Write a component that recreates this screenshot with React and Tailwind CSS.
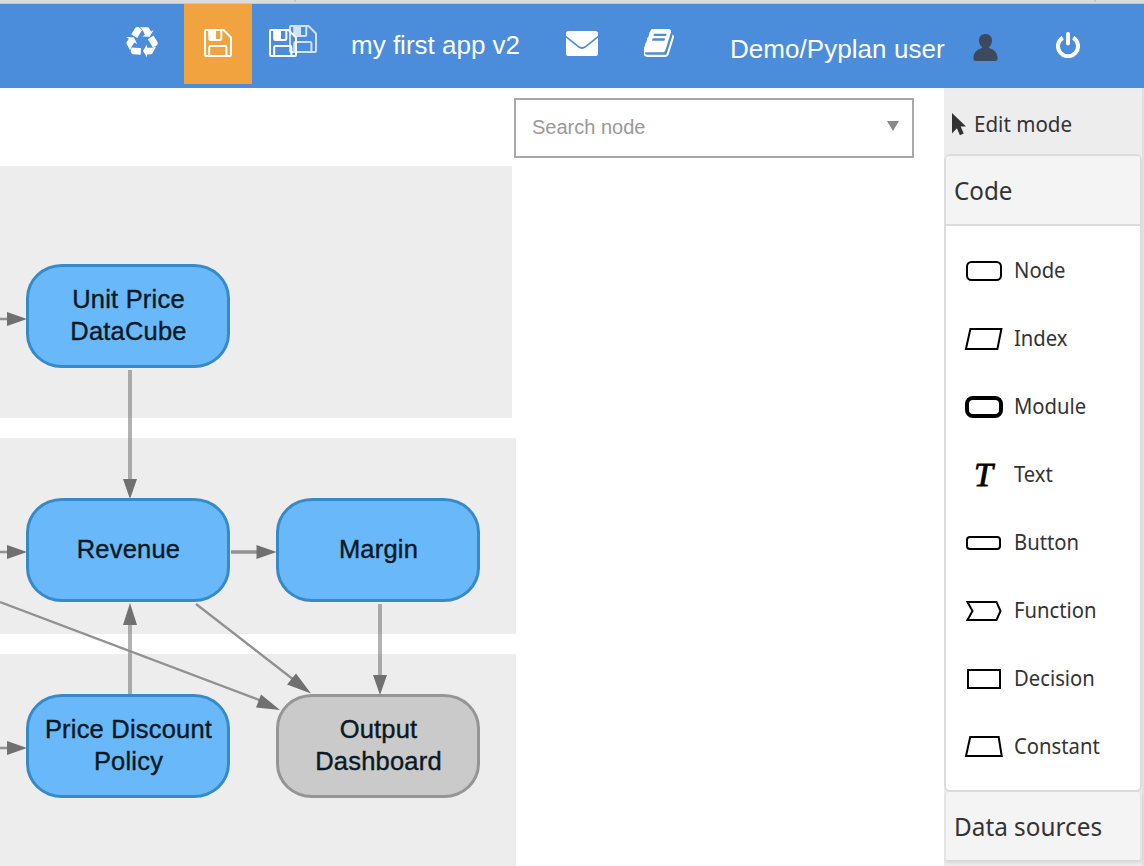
function Recycle() {
  return (
    <svg width="32" height="31" viewBox="0 0 1792 1736" fill="#fff">
      <path d="M836 1169l-15 368-2 22-420-29q-36-3-67-31.500t-47-65.500q-11-27-14.500-55t4-65 12-55 21.500-64 19-53q78 12 509 28zm-387-586l180 379-147-92q-63 72-111.500 144.500t-72.500 125-39.500 94.500-18.500 63l-4 21-190-357q-17-26-18-56t6-47l8-18q35-63 114-188l-140-86zm1231 517l-188 359q-12 29-36.500 46.500t-43.500 20.500l-18 4q-71 7-219 12l8 164-230-367 211-362 7 173q170 16 283 5t170-33zm-785-924q-47 63-265 435l-317-187-19-12 225-356q20-31 60-45t80-10q24 2 48.500 12t42 21 41.500 33 36 34.500 36 39.500 32 35zm655 307l212 363q18 37 12.500 76t-27.500 74q-13 20-33 37t-38 28-48.500 22-47 16-51.500 14-46 12q-34-72-265-436l313-195zm-143-226l142-83-220 373-419-20 151-86q-34-89-75-166t-75.500-123.500-64.500-80-47-46.500l-17-13 405 1q31-3 58 10.500t39 28.500l11 15q39 61 112 190z" />
    </svg>
  );
}

function Floppy({ className }) {
  return (
    <svg viewBox="0 0 28 28" className={className} fill="none" stroke="#fff" strokeWidth="2" strokeLinejoin="round">
      <path d="M2 1h17.500L27 8.500V26q0 1-1 1H2q-1 0-1-1V2q0-1 1-1z" />
      <path d="M5.200 1v8.800q0 1.200 1.200 1.200h9.700q1.200 0 1.200-1.200v-8.800M5.200 27v-8.700q0-1.200 1.200-1.200h14.800q1.200 0 1.200 1.200v8.700" />
      <path d="M5.500 1.500h6.500v9h-6.500z" fill="#fff" stroke="none" />
    </svg>
  );
}

function Envelope() {
  return (
    <svg width="32" height="25" viewBox="0 0 32 25">
      <rect width="32" height="25" rx="2.500" fill="#fff" />
      <path d="M-.5 5.300 12.700 15.800q3.300 2.500 6.600 0L32.500 5.300" fill="none" stroke="#4b8ddb" strokeWidth="1.700" />
    </svg>
  );
}

function Book() {
  return (
    <svg width="30" height="28" viewBox="64 128 1600 1536" preserveAspectRatio="none" fill="#fff">
      <path d="M1639 478q40 57 18 129l-275 906q-19 64-76.500 107.500t-122.500 43.500h-923q-77 0-148.500-53.500t-99.500-131.500q-24-67-2-127 0-4 3-27t4-37q1-8-3-21.500t-3-19.500q2-11 8-21t16.500-23.500 16.500-23.500q23-38 45-91.500t30-91.500q3-10 .5-30t-.5-28q3-11 17-28t17-23q21-36 42-92t25-90q1-9-2.500-32t.5-28q4-13 22-30.500t22-22.500q19-26 42.500-84.500t27.500-96.500q1-8-3-25.500t-2-26.500q2-8 9-18t18-23 17-21q8-12 16.500-30.500t15-35 16-36 19.500-32 26.500-23.500 36-11.500 47.500 5.500l-1 3q38-9 51-9h761q74 0 114 56t18 130l-274 906q-36 119-71.500 153.500t-128.500 34.500h-869q-27 0-38 15-11 16-1 43 24 70 144 70h923q29 0 56-15.500t35-41.500l300-987q7-22 5-57 38 15 59 43zm-1064 2q-4 13 2 22.500t20 9.500h608q13 0 25.500-9.500t16.500-22.500l21-64q4-13-2-22.500t-20-9.500h-608q-13 0-25.500 9.500t-16.500 22.500zm-83 256q-4 13 2 22.500t20 9.500h608q13 0 25.500-9.500t16.500-22.500l21-64q4-13-2-22.500t-20-9.500h-608q-13 0-25.500 9.500t-16.500 22.500z" />
    </svg>
  );
}

function TopBar() {
  return (
    <header className="flex h-[84px] shrink-0 items-start bg-[#4b8ddb] font-['Liberation_Sans',sans-serif] text-white">
      <div className="flex h-20 w-[184px] items-center justify-end pr-[26px] pb-[4px]">
        <Recycle />
      </div>
      <div className="flex h-20 w-[68px] items-center justify-center bg-[#f1a33f] pr-[1px] pb-0.5">
        <Floppy className="h-7 w-7" />
      </div>
      <div className="ml-[17px] flex pt-[21px]">
        <Floppy className="mt-1 h-7 w-7" />
        <Floppy className="-ml-2 h-7 w-7 opacity-75" />
      </div>
      <span className="ml-[34px] w-[170px] pt-[26px] text-[26px] leading-[30px] whitespace-nowrap">my first app v2</span>
      <div className="ml-[45px] pt-[27px]"><Envelope /></div>
      <div className="ml-[46px] pt-[25px]"><Book /></div>
      <span className="ml-[56px] w-[216px] pt-[30px] text-[26px] leading-[30px] tracking-[0.05px] whitespace-nowrap">Demo/Pyplan user</span>
      <svg className="mt-[30px] ml-[27px]" width="25" height="27" viewBox="0 0 26 27" preserveAspectRatio="none" fill="#3b4a5c">
        <path d="M13 0c4.200 0 6.800 2.900 6.800 6.500 0 2.800-1.400 5.300-3.200 6.600v.8c5.500 1.600 8.900 4.800 8.900 9.600V25q0 2-2 2h-21q-2 0-2-2v-1.500c0-4.800 3.400-8 8.900-9.600v-.8c-1.800-1.300-3.200-3.800-3.200-6.600C6.200 2.900 8.800 0 13 0z" />
      </svg>
      <svg className="mt-[28px] ml-[58px]" width="24" height="26" viewBox="0 0 24 26" fill="none" stroke="#fff" strokeWidth="4" strokeLinecap="round">
        <path d="M12 2v9.500" />
        <path d="M6.800 5.700a10 10 0 1 0 10.400 0" strokeLinecap="butt" />
      </svg>
    </header>
  );
}

const blue = "border-[#368ac7] bg-[#69b9fa]";
const gray = "border-[#959595] bg-[#cacaca]";

const nodes = [
  { lines: ["Unit Price", "DataCube"], place: "left-[26px] top-[176px]", tone: blue },
  { lines: ["Revenue"], place: "left-[26px] top-[410px]", tone: blue },
  { lines: ["Margin"], place: "left-[276px] top-[410px]", tone: blue },
  { lines: ["Price Discount", "Policy"], place: "left-[26px] top-[606px]", tone: blue },
  { lines: ["Output", "Dashboard"], place: "left-[276px] top-[606px]", tone: gray },
];

function Edges() {
  return (
    <svg className="absolute top-0 left-0" width="520" height="778" viewBox="0 88 520 778">
      <g stroke="#666" strokeOpacity=".5" strokeWidth="4" fill="none">
        <path d="M130 370V480M130 694V624M380 604V676" />
      </g>
      <g stroke="#919191" strokeWidth="2.400" fill="none">
        <path d="M0 319H10M0 552H10M0 748H10M196 604 294 680M0 602 262 701" />
        <path d="M231 552H260" strokeWidth="3.500" />
      </g>
      <g fill="#707070">
        <path d="M7 312v14l20-7zM7 545v14l20-7zM7 741v14l20-7zM256.500 545v14l20-7z" />
        <path d="M123 479h14l-7 20zM123 625h14l-7-22zM373 675h14l-7 20z" />
        <path d="M296 673.500 287 684.500 311 693.500zM261 694.500 256 707.500 280 710z" />
      </g>
    </svg>
  );
}

function Diagram() {
  return (
    <main className="relative h-[778px] w-[944px] bg-white font-['Liberation_Sans',sans-serif]">
      <div className="absolute top-[78px] left-0 h-[252px] w-[512px] bg-[#ededed]" />
      <div className="absolute top-[350px] left-0 h-[196px] w-[516px] bg-[#ededed]" />
      <div className="absolute top-[566px] left-0 h-[212px] w-[516px] bg-[#ededed]" />
      <Edges />
      {nodes.map((n) => (
        <div
          key={n.lines[0]}
          className={`absolute flex h-[104px] w-[204px] flex-col items-center justify-center rounded-[36px/34px] border-[3.500px] pb-0.5 pl-[1px] text-[25.500px] leading-8 tracking-[0.2px] whitespace-nowrap text-[#0b1924] [-webkit-text-stroke:0.4px_#0b1924] ${n.place} ${n.tone}`}
        >
          {n.lines.map((l) => <span key={l}>{l}</span>)}
        </div>
      ))}
      <div className="absolute top-[10px] left-[514px] flex h-[60px] w-[400px] items-center justify-between border-2 border-[#a9a9a9] bg-white pr-[13px] pb-[2px] pl-4">
        <span className="text-[20px] leading-6 text-[#999]">Search node</span>
        <svg width="12" height="10" className="mb-[2px]" viewBox="0 0 12 10" fill="#888"><path d="M0 0h12L6 10z" /></svg>
      </div>
    </main>
  );
}

const shape = { fill: "none", stroke: "#000", strokeWidth: 2 };

const tools = [
  { name: "Node", icon: <rect x="3" y="5" width="34" height="18" rx="4.500" {...shape} /> },
  { name: "Index", icon: <path d="M6.400 4h31l-4 20h-31.500z" {...shape} /> },
  { name: "Module", icon: <rect x="3" y="5" width="34" height="18" rx="6" {...shape} strokeWidth="4" /> },
  { name: "Text", icon: null },
  { name: "Button", icon: <rect x="3" y="8" width="33" height="12" rx="3" {...shape} /> },
  { name: "Function", icon: <path d="M3.500 5H32.500l4 9-4 9H3.500l5-9z" {...shape} /> },
  { name: "Decision", icon: <path d="M4 5h32v18H4z" {...shape} /> },
  { name: "Constant", icon: <path d="M6.200 4h28.500l3 19H2z" {...shape} /> },
];

function Sidebar() {
  return (
    <aside className="flex h-[778px] w-[200px] flex-col border-r-[2px] border-[#e3dfdf] bg-[#ededed] font-['Noto_Sans',sans-serif] text-[#333]">
      <div className="flex h-[66px] shrink-0 items-center pt-[6px] pl-[8px]">
        <svg width="14" height="23" viewBox="0 0 14 23" fill="#333"><path d="M0 0 14 13.500H8.700l3 7-3.800 1.800-3-7L0 20.500z" /></svg>
        <span className="ml-2 origin-left scale-x-[0.935] pb-[2px] text-[22px] leading-7 whitespace-nowrap">Edit mode</span>
      </div>
      <section className="h-[638px] w-[198px] shrink-0 overflow-hidden rounded-[6px] border-2 border-[#dcdcdc] bg-white">
        <h2 className="flex h-[70px] items-center border-b-2 border-[#dcdcdc] bg-[#f4f4f4] pl-2 text-[26px]">
          <span className="origin-left scale-x-[0.93]">Code</span>
        </h2>
        <ul className="pt-[11px]">
          {tools.map((t) => (
            <li key={t.name} className="flex h-[68px] items-center">
              <div className="ml-[18px] flex h-7 w-[42px] items-center justify-center">
                {t.icon ? (
                  <svg width="42" height="28" viewBox="0 0 42 28">{t.icon}</svg>
                ) : (
                  <span className="-ml-[3px] font-['Liberation_Serif',serif] text-[34px] leading-7 text-black italic [-webkit-text-stroke:0.8px_#000]">T</span>
                )}
              </div>
              <span className="ml-[8px] origin-left scale-x-[0.92] pb-[4px] text-[22px] leading-7">{t.name}</span>
            </li>
          ))}
        </ul>
      </section>
      <h2 className="flex h-[68px] w-[198px] shrink-0 items-center rounded-[3px] border-x-2 border-[#e4e4e4] bg-[#f4f4f4] pl-2 text-[26px] whitespace-nowrap shadow-[0_2px_4px_#cfcfcf]">
        <span className="origin-left scale-x-[0.935]">Data sources</span>
      </h2>
    </aside>
  );
}

export default function App() {
  return (
    <div className="flex h-[866px] w-[1144px] flex-col overflow-hidden bg-white">
      <div className="flex h-1 shrink-0 border-b border-[#c9c9c4] bg-[#dcdcdc]">
        <div className="h-[2px] w-[296px] border-r-2 border-[#c8c8c8]" />
        <div className="h-[2px] w-[800px] border-r-2 border-[#c8c8c8]" />
      </div>
      <TopBar />
      <div className="flex">
        <Diagram />
        <Sidebar />
      </div>
    </div>
  );
}
